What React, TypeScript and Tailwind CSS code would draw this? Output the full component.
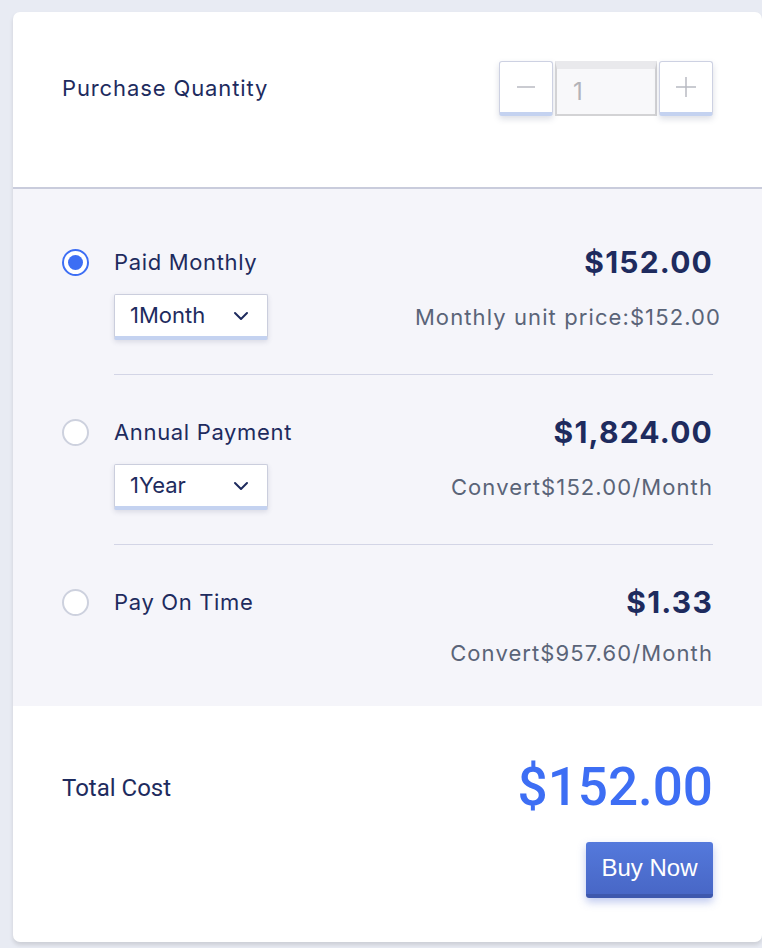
import { useState } from "react";

type Option = {
  id: string;
  label: string;
  price: string;
  note: string;
  select?: string;
};

const OPTIONS: Option[] = [
  { id: "monthly", label: "Paid Monthly", price: "$152.00", note: "Monthly unit price:$152.00", select: "1Month" },
  { id: "annual", label: "Annual Payment", price: "$1,824.00", note: "Convert$152.00/Month", select: "1Year" },
  { id: "ontime", label: "Pay On Time", price: "$1.33", note: "Convert$957.60/Month" },
];

function Radio({ checked }: { checked: boolean }) {
  return checked ? (
    <span className="flex h-[27px] w-[27px] items-center justify-center rounded-full border-2 border-[#3d6ef4] bg-white">
      <span className="h-[15px] w-[15px] rounded-full bg-[#3d6ef4]" />
    </span>
  ) : (
    <span className="h-[27px] w-[27px] rounded-full border-2 border-[#cdd1de] bg-white" />
  );
}

function Chevron() {
  return (
    <svg width="16" height="10" viewBox="0 0 16 10" fill="none">
      <path d="M2 2l6 6 6-6" stroke="#1e2b5e" strokeWidth="2" strokeLinecap="round" strokeLinejoin="round" />
    </svg>
  );
}

function StepBtn({ children }: { children: React.ReactNode }) {
  return (
    <button className="flex h-[55px] w-[54px] items-center justify-center rounded-[3px] border border-[#cdd1e2] border-b-[4px] border-b-[#c4d2f0] bg-white text-[#b5b8c0] shadow-[0_3px_6px_rgba(60,70,110,0.18)]">
      {children}
    </button>
  );
}

export default function App() {
  const [selected, setSelected] = useState("monthly");

  return (
    <div className="min-h-[948px] w-full bg-[#e8ebf3] pl-[13px] pt-[12px] font-['Inter',sans-serif] text-[#1e2b5e]">
      <div className="flex h-[930px] w-[749px] flex-col overflow-hidden rounded-[7px] bg-white shadow-[0_3px_4px_rgba(0,0,0,0.12)]">
        <div className="h-[177px] shrink-0 border-b-2 border-[#c9ccdc] px-[49px] pt-[49px]">
          <div className="flex h-[55px] items-center justify-between">
            <span className="text-[22px] tracking-[0.04em]">Purchase Quantity</span>
            <div className="flex items-center gap-[2px]">
              <StepBtn>
                <svg width="20" height="20" viewBox="0 0 20 20">
                  <path d="M1 10h18" stroke="#b8bac2" strokeWidth="1.5" />
                </svg>
              </StepBtn>
              <div className="flex h-[55px] w-[102px] items-center border-2 border-[#d3d3d5] border-t-[8px] border-t-[#e9e9ec] bg-[#f8f8fa] pl-[16px] text-[24px] text-[#b3b3b8]">
                1
              </div>
              <StepBtn>
                <svg width="22" height="22" viewBox="0 0 22 22">
                  <path d="M1 11h20M11 1v20" stroke="#b8bac2" strokeWidth="1.5" />
                </svg>
              </StepBtn>
            </div>
          </div>
        </div>

        <div className="shrink-0 bg-[#f5f5fa] px-[49px] pt-[15px]">
          {OPTIONS.map((o, i) => {
            const last = i === OPTIONS.length - 1;
            const pad = i === 0 ? "pt-[40px]" : last ? "pb-[30px] pt-[39px]" : "pt-[39px]";
            return (
              <div key={o.id} className={pad}>
                <div className="flex h-[36px] items-center justify-between">
                  <button className="flex items-center gap-[25px]" onClick={() => setSelected(o.id)}>
                    <Radio checked={selected === o.id} />
                    <span className="text-[22px] tracking-[0.03em]">{o.label}</span>
                  </button>
                  <span className="text-[30px] font-bold tracking-[0.04em]">{o.price}</span>
                </div>
                <div className={last ? "mt-[10px] flex h-[46px] items-center justify-between pl-[52px]" : "mt-[14px] flex h-[46px] items-center justify-between pl-[52px]"}>
                  {o.select ? (
                    <div className="flex h-[46px] w-[154px] items-center justify-between rounded-[2px] border border-[#cbcedd] border-b-[4px] border-b-[#c4d2f0] bg-white pl-[15px] pr-[18px] text-[22px] shadow-[0_2px_5px_rgba(60,70,110,0.15)]">
                      <span>{o.select}</span>
                      <Chevron />
                    </div>
                  ) : (
                    <span />
                  )}
                  <span className={i === 0 ? "-mr-[8px] text-[22px] tracking-[0.05em] text-[#5a6478]" : "text-[22px] tracking-[0.05em] text-[#5a6478]"}>
                    {o.note}
                  </span>
                </div>
                {!last && <div className="ml-[52px] mt-[34px] h-[1px] bg-[#d3d5e6]" />}
              </div>
            );
          })}
        </div>

        <div className="flex flex-1 flex-col px-[49px] pt-[52px] font-['Roboto',sans-serif]">
          <div className="flex h-[60px] items-center justify-between">
            <span className="text-[24px] text-[#1e2b5e]">Total Cost</span>
            <span className="text-[53px] font-medium text-[#3d6ef4]">$152.00</span>
          </div>
          <div className="mt-[24px] flex justify-end">
            <button className="h-[56px] w-[127px] rounded-[3px] border-b-[4px] border-b-[#3e58ad] bg-gradient-to-b from-[#5479dc] to-[#4867c6] font-['Liberation_Sans',sans-serif] text-[24px] text-white shadow-[0_4px_8px_rgba(70,100,210,0.35)]">
              Buy Now
            </button>
          </div>
        </div>
      </div>
    </div>
  );
}
